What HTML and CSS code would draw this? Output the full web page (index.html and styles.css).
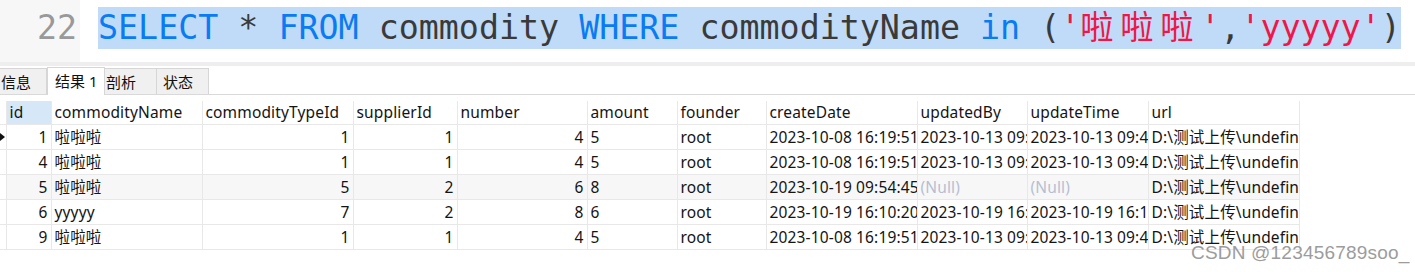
FILE: index.html
```html
<!DOCTYPE html>
<html lang="zh-CN">
<head>
    <meta charset="UTF-8">
    <title>查询结果</title>
    <link rel="stylesheet" href="styles.css">
</head>
<body>
    <div class="editor">
        <div class="gutter">22</div>
        <div class="code"><span class="sel"><span class="kw">SELECT</span> * <span class="kw">FROM</span> commodity <span class="kw">WHERE</span> commodityName <span class="kw">in</span> (<span class="str">'<span class="cjk">啦啦啦</span>'</span>,<span class="str">'yyyyy'</span>)</span></div>
    </div>
    <div class="divider"></div>

    <div class="tabs">
        <div class="tab">信息</div>
        <div class="tab active">结果 1</div>
        <div class="tab">剖析</div>
        <div class="tab">状态</div>
    </div>

    <div class="grid-wrap">
        <table class="grid">
            <colgroup>
                <col style="width:6px"><col style="width:45px"><col style="width:151px"><col style="width:151px">
                <col style="width:104px"><col style="width:130px"><col style="width:90px"><col style="width:89px">
                <col style="width:151px"><col style="width:110px"><col style="width:121px"><col style="width:151px">
            </colgroup>
            <thead>
                <tr>
                    <th class="mark"></th>
                    <th class="current">id</th>
                    <th>commodityName</th>
                    <th>commodityTypeId</th>
                    <th>supplierId</th>
                    <th>number</th>
                    <th>amount</th>
                    <th>founder</th>
                    <th>createDate</th>
                    <th>updatedBy</th>
                    <th>updateTime</th>
                    <th>url</th>
                </tr>
            </thead>
            <tbody>
                <tr>
                    <td class="mark"><span class="arrow"></span></td>
                    <td class="num">1</td><td>啦啦啦</td><td class="num">1</td><td class="num">1</td><td class="num">4</td>
                    <td>5</td><td>root</td><td>2023-10-08 16:19:51</td><td>2023-10-13 09:47:34</td><td>2023-10-13 09:47:34</td><td>D:\测试上传\undefined</td>
                </tr>
                <tr>
                    <td class="mark"></td>
                    <td class="num">4</td><td>啦啦啦</td><td class="num">1</td><td class="num">1</td><td class="num">4</td>
                    <td>5</td><td>root</td><td>2023-10-08 16:19:51</td><td>2023-10-13 09:47:34</td><td>2023-10-13 09:47:34</td><td>D:\测试上传\undefined</td>
                </tr>
                <tr class="hover">
                    <td class="mark"></td>
                    <td class="num">5</td><td>啦啦啦</td><td class="num">5</td><td class="num">2</td><td class="num">6</td>
                    <td>8</td><td>root</td><td>2023-10-19 09:54:45</td><td class="null">(Null)</td><td class="null">(Null)</td><td>D:\测试上传\undefined</td>
                </tr>
                <tr>
                    <td class="mark"></td>
                    <td class="num">6</td><td>yyyyy</td><td class="num">7</td><td class="num">2</td><td class="num">8</td>
                    <td>6</td><td>root</td><td>2023-10-19 16:10:20</td><td>2023-10-19 16:10:20</td><td>2023-10-19 16:10:20</td><td>D:\测试上传\undefined</td>
                </tr>
                <tr>
                    <td class="mark"></td>
                    <td class="num">9</td><td>啦啦啦</td><td class="num">1</td><td class="num">1</td><td class="num">4</td>
                    <td>5</td><td>root</td><td>2023-10-08 16:19:51</td><td>2023-10-13 09:47:34</td><td>2023-10-13 09:47:34</td><td>D:\测试上传\undefined</td>
                </tr>
            </tbody>
        </table>
    </div>

    <div class="watermark">CSDN @123456789soo_</div>
</body>
</html>
```

FILE: styles.css
```css
body {
    margin: 0;
    background: #fff;
    font-family: "Noto Sans", "Noto Sans CJK SC", sans-serif;
    position: relative;
    height: 272px;
    overflow: hidden;
}

.editor {
    display: flex;
    height: 62px;
    overflow: hidden;
}

.gutter {
    flex: none;
    width: 80px;
    background: #f7f7f7;
    color: #999;
    font-family: "DejaVu Sans Mono", monospace;
    font-size: 33.3px;
    line-height: 42px;
    padding-top: 7px;
    text-align: right;
    padding-right: 3px;
    box-sizing: border-box;
}

.code {
    flex: none;
    padding: 7px 0 0 18px;
    font-family: "DejaVu Sans Mono", "Noto Sans CJK SC", monospace;
    font-size: 33.3px;
    line-height: 42px;
    color: #3a3a3a;
    white-space: pre;
}

.sel {
    background: #bfdbf7;
    display: inline-block;
    height: 42px;
}

.kw { color: #0a7bf2; }
.str { color: #f0164a; }
.cjk { letter-spacing: 6.7px; }

.divider {
    height: 4px;
    background: #eeeeee;
}

.tabs {
    display: flex;
    align-items: flex-end;
    height: 28px;
    border-bottom: 1px solid #d9d9d9;
    font-size: 15px;
    color: #111;
}

.tab {
    height: 26px;
    line-height: 26px;
    background: #f0f0f0;
    border: 1px solid #d6d6d6;
    border-bottom: none;
    border-left: none;
    padding: 0 0 0 1px;
    box-sizing: border-box;
}

.tab:nth-child(1) { width: 47px; }
.tab:nth-child(2) { width: 58px; }
.tab:nth-child(3) { width: 52px; }
.tab:nth-child(4) { width: 52px; padding-left: 6px; }

.tab.active {
    background: #fff;
    height: 28px;
    padding-left: 7px;
    border-left: 1px solid #d6d6d6;
    margin-bottom: -1px;
    line-height: 27px;
}

.grid-wrap {
    padding-top: 6px;
}

.grid {
    table-layout: fixed;
    border-collapse: collapse;
    width: 1299px;
    font-size: 15.5px;
    letter-spacing: 0.15px;
    color: #141414;
}

.grid th,
.grid td {
    border: 1px solid #e8e8e8;
    padding: 0 3px;
    white-space: nowrap;
    overflow: hidden;
    text-overflow: clip;
    text-align: left;
    font-weight: normal;
}

.grid th {
    height: 23px;
    line-height: 23px;
    border-top: none;
}

.grid td {
    height: 24px;
    line-height: 24px;
}

.grid th:first-child,
.grid td:first-child {
    border-left: none;
}

.grid th.current {
    background: #d6e7f8;
}

.grid .mark {
    padding: 0;
    position: relative;
}

.arrow {
    position: absolute;
    left: 0;
    top: 8px;
    border-left: 5px solid #111;
    border-top: 4px solid transparent;
    border-bottom: 4px solid transparent;
}

.grid td.num {
    text-align: right;
}

.grid td.null {
    color: #b5bfd2;
}

.grid tr.hover td {
    background: #f7f7f7;
}

.grid tr.hover td.mark {
    background: #fff;
}

.watermark {
    position: absolute;
    left: 1191px;
    top: 242px;
    font-family: "Liberation Sans", Arial, sans-serif;
    font-size: 19px;
    color: #9c9c9c;
    letter-spacing: 0.2px;
}
```
